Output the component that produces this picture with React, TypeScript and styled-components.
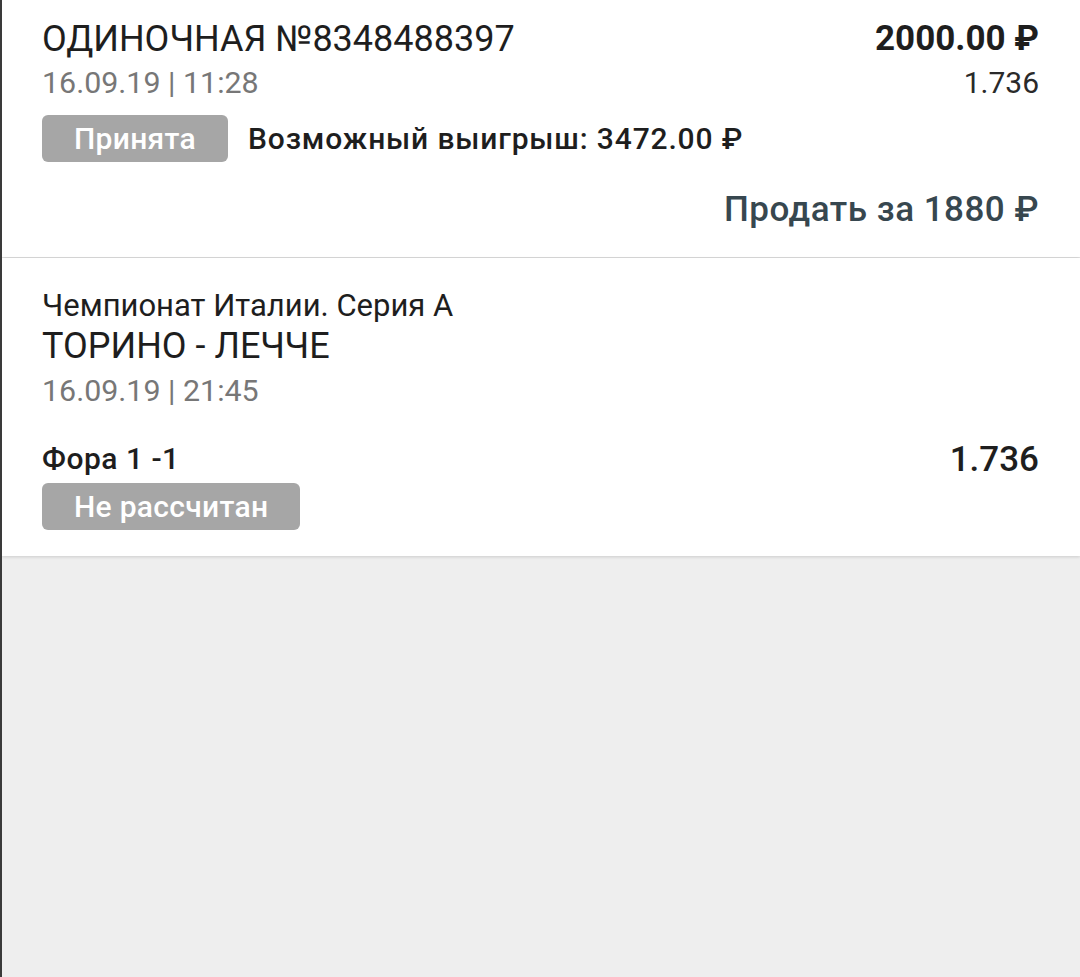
import React from "react"
import styled, {createGlobalStyle} from "styled-components"

const Global = createGlobalStyle`
  html, body {
    margin: 0;
    padding: 0;
    background: #eeeeee;
  }
  body {
    font-family: Roboto, "Noto Sans", Arial, sans-serif;
    color: #212121;
  }
`

const Screen = styled.div`
  width: 1080px;
  height: 977px;
  box-sizing: border-box;
  background: #eeeeee;
  border-left: 2px solid #3a3a3a;
  overflow: hidden;
  display: flex;
  flex-direction: column;
  gap: 1px;
`

const Card = styled.section<{$top: number}>`
  background: #ffffff;
  box-shadow: 0 1px 3px rgba(0, 0, 0, 0.14);
  padding: ${(p) => p.$top}px 41px 26px 40px;
  display: flex;
  flex-direction: column;
`

const Row = styled.div<{$gap?: number}>`
  display: flex;
  justify-content: space-between;
  align-items: flex-start;
  margin-top: ${(p) => p.$gap ?? 0}px;
`

const Col = styled.div<{$right?: boolean}>`
  display: flex;
  flex-direction: column;
  align-items: ${(p) => (p.$right ? "flex-end" : "flex-start")};
`

const Title = styled.div`
  font-size: 36px;
  line-height: 44px;
  color: #1e1e1e;
`

const Amount = styled.div`
  font-size: 35px;
  line-height: 44px;
  font-weight: 700;
  color: #1e1e1e;
`

const DateText = styled.div<{$gap: number}>`
  font-size: 30.4px;
  line-height: 36px;
  color: #777777;
  margin-top: ${(p) => p.$gap}px;
`

const Odds = styled.div`
  font-size: 30px;
  line-height: 36px;
  color: #2a2a2a;
  margin-top: 4px;
`

const BadgeRow = styled.div`
  display: flex;
  align-items: center;
  gap: 20px;
  margin-top: 14px;
`

const Badge = styled.span<{$gap?: number}>`
  display: inline-flex;
  align-items: center;
  height: 47px;
  padding: 0 32px;
  margin-top: ${(p) => p.$gap ?? 0}px;
  border-radius: 6px;
  background: #a6a6a6;
  color: #ffffff;
  font-size: 30px;
  font-weight: 500;
  letter-spacing: 0.3px;
`

const Potential = styled.span`
  font-size: 30px;
  font-weight: 500;
  letter-spacing: 0.85px;
  color: #1e1e1e;
`

const Sell = styled.div`
  align-self: flex-end;
  margin-top: 27px;
  font-size: 35px;
  line-height: 42px;
  font-weight: 500;
  letter-spacing: 0.5px;
  color: #37474f;
`

const League = styled.div`
  font-size: 31px;
  line-height: 36px;
  color: #1e1e1e;
`

const Teams = styled.div`
  font-size: 36px;
  line-height: 44px;
  color: #1e1e1e;
`

const Market = styled.div`
  font-size: 30px;
  line-height: 36px;
  font-weight: 500;
  letter-spacing: 0.5px;
  color: #1e1e1e;
`

const Price = styled.div`
  font-size: 35px;
  line-height: 36px;
  font-weight: 500;
  color: #1e1e1e;
  margin-top: 1px;
`

export default function App() {
  return (
    <>
      <Global />
      <Screen>
        <Card $top={17}>
          <Row>
            <Col>
              <Title>ОДИНОЧНАЯ №8348488397</Title>
              <DateText $gap={4}>16.09.19 | 11:28</DateText>
            </Col>
            <Col $right>
              <Amount>2000.00 ₽</Amount>
              <Odds>1.736</Odds>
            </Col>
          </Row>
          <BadgeRow>
            <Badge>Принята</Badge>
            <Potential>Возможный выигрыш: 3472.00 ₽</Potential>
          </BadgeRow>
          <Sell>Продать за 1880 ₽</Sell>
        </Card>
        <Card $top={30}>
          <League>Чемпионат Италии. Серия А</League>
          <Teams>ТОРИНО - ЛЕЧЧЕ</Teams>
          <DateText $gap={5}>16.09.19 | 21:45</DateText>
          <Row $gap={32}>
            <Col>
              <Market>Фора 1 -1</Market>
              <Badge $gap={6}>Не рассчитан</Badge>
            </Col>
            <Price>1.736</Price>
          </Row>
        </Card>
      </Screen>
    </>
  )
}
